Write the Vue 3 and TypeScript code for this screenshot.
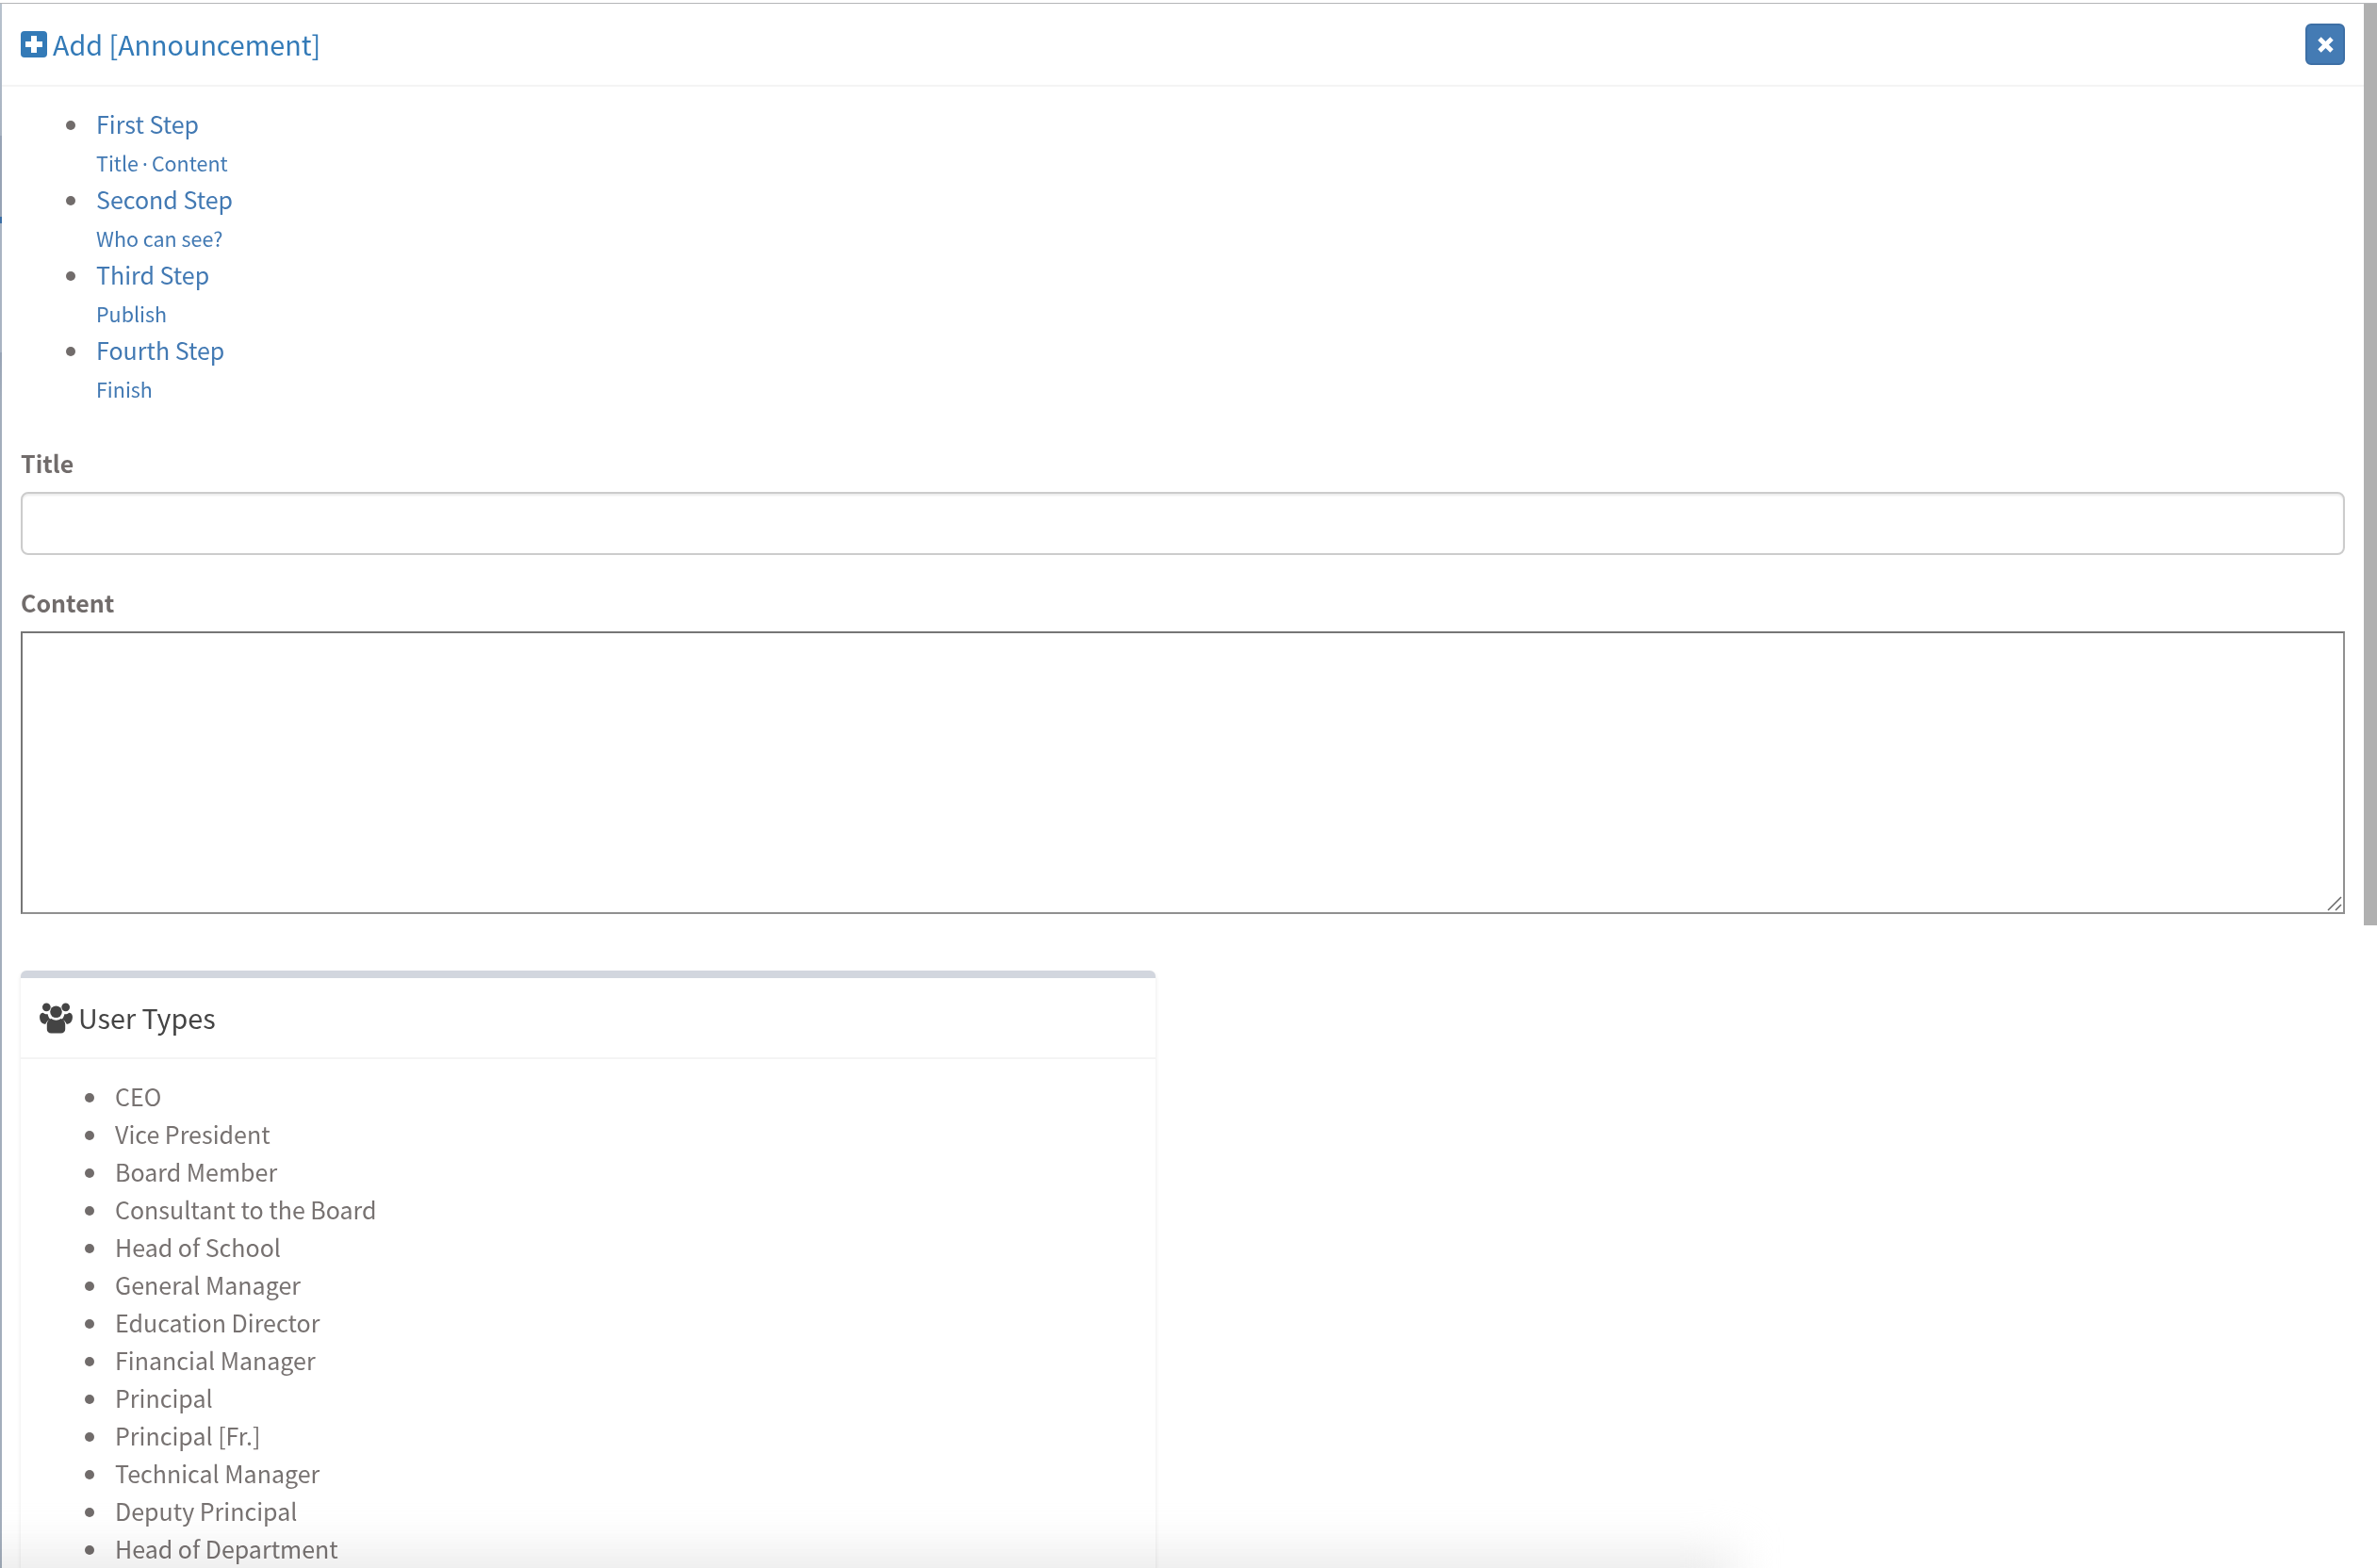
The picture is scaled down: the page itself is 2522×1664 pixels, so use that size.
<script setup lang="ts">
interface Step { title: string; sub: string }

const steps: Step[] = [
  { title: 'First Step', sub: 'Title · Content' },
  { title: 'Second Step', sub: 'Who can see?' },
  { title: 'Third Step', sub: 'Publish' },
  { title: 'Fourth Step', sub: 'Finish' },
]

const userTypes = [
  'CEO',
  'Vice President',
  'Board Member',
  'Consultant to the Board',
  'Head of School',
  'General Manager',
  'Education Director',
  'Financial Manager',
  'Principal',
  'Principal [Fr.]',
  'Technical Manager',
  'Deputy Principal',
  'Head of Department',
]
</script>

<template>
  <div class="page">
    <div class="modal">
      <header class="modal-header">
        <h4 class="modal-title">
          <svg class="plus-icon" viewBox="0 0 28 28">
            <rect width="28" height="28" rx="4" fill="#337ab7" />
            <path d="M11 5h6v6h6v6h-6v6h-6v-6H5v-6h6z" fill="#fff" />
          </svg>
          <span>Add [Announcement]</span>
        </h4>
        <button class="close-btn" type="button" aria-label="Close">
          <svg viewBox="2 2 12 12" width="17" height="17">
            <path d="M2.2 4.6 4.6 2.200 8 5.600l3.400-3.400 2.400 2.400L10.400 8l3.400 3.400-2.400 2.400L8 10.400l-3.400 3.400-2.400-2.400L5.600 8z" fill="#fff" />
          </svg>
        </button>
      </header>

      <div class="modal-body">
        <ul class="steps">
          <li v-for="s in steps" :key="s.title">
            <a class="step-title">{{ s.title }}</a>
            <a class="step-sub">
              <template v-for="(part, i) in s.sub.split(' · ')" :key="part">
                <span v-if="i" class="dot"> · </span>{{ part }}
              </template>
            </a>
          </li>
        </ul>

        <div class="field title-field">
          <label>Title</label>
          <input type="text" class="title-input" />
        </div>

        <div class="field content-field">
          <label>Content</label>
          <div class="textarea-wrap">
            <textarea class="content-input"></textarea>
            <svg class="grip" viewBox="0 0 16 16">
              <path d="M1 15 15 1M9 15l6-6" stroke="#666" stroke-width="1.500" fill="none" />
            </svg>
          </div>
        </div>

        <section class="box">
          <div class="box-header">
            <svg class="users-icon" viewBox="0 0 36 34">
              <g fill="#444">
                <circle cx="7.500" cy="5" r="4.500" />
                <circle cx="28.500" cy="5" r="4.500" />
                <circle cx="18" cy="10" r="6.500" />
                <path d="M0 15.500C0 12.500 2 11 4 11c1 1 2.500 1.600 4 1.600.3 0 .6 0 .9-.1.3 2.300 1.300 4.300 3 5.800-2.300 .8-4.400 2.600-5.400 5.200C3 23.500 0 21 0 15.500zM36 15.500c0-3-2-4.500-4-4.500-1 1-2.500 1.600-4 1.600-.3 0-.6 0-.9-.1-.3 2.300-1.300 4.300-3 5.800 2.300 .8 4.400 2.600 5.400 5.200C33 23.500 36 21 36 15.500z" />
                <path d="M8 24c0-3.500 2.500-6 5-6.500 1.300 1.100 3 1.700 5 1.700s3.700-.6 5-1.700c2.500 .5 5 3 5 6.500v5c0 2.500-2 4.500-4.500 4.500h-11C10 33.500 8 31.500 8 29z" />
              </g>
            </svg>
            <span>User Types</span>
          </div>
          <ul class="type-list">
            <li v-for="t in userTypes" :key="t">{{ t }}</li>
          </ul>
        </section>
      </div>
    </div>

    <div class="strip"></div>
    <div class="scrollbar"></div>
    <div class="fade"></div>
  </div>
</template>

<style>
html, body {
  margin: 0;
  height: 1664px;
  overflow: hidden;
  background: #fff;
}
</style>

<style scoped>
.page {
  position: relative;
  width: 2522px;
  height: 1664px;
  overflow: hidden;
  background: #fff;
  box-sizing: border-box;
  padding-top: 3px;
  font-family: "Noto Sans CJK SC", "Noto Sans", sans-serif;
  font-size: 25px;
  line-height: 40px;
  color: #777271;
}
.modal {
  border-top: 1px solid #b4b6b8;
  padding-left: 2px;
}
.modal-header {
  display: flex;
  align-items: center;
  justify-content: space-between;
  height: 86px;
  padding: 0 34px 0 20px;
  border-bottom: 2px solid #f4f4f4;
}
.modal-title {
  display: flex;
  align-items: center;
  gap: 6px;
  margin: 0;
  font-size: 28.700px;
  line-height: 38px;
  font-weight: 400;
  color: #337ab7;
}
.plus-icon { width: 28px; height: 28px; }
.close-btn {
  display: flex;
  align-items: center;
  justify-content: center;
  width: 42px;
  height: 44px;
  padding: 0;
  border: 2px solid #3d6fa5;
  border-radius: 6px;
  background: #447bb4;
}
.modal-body { padding: 20px 34px 0 20px; }
.steps {
  margin: 0;
  padding: 0 0 0 80px;
  list-style: none;
}
.steps li, .type-list li {
  position: relative;
}
.steps li { height: 80px; }
.steps li::before, .type-list li::before {
  content: "";
  position: absolute;
  top: 16px;
  left: -32px;
  width: 10px;
  height: 10px;
  border-radius: 50%;
  background: #716c6b;
}
.step-title {
  display: block;
  height: 40px;
  line-height: 38px;
  color: #4279b3;
}
.step-sub {
  display: block;
  height: 40px;
  line-height: 41px;
  font-size: 21.500px;
  color: #4279b3;
}
.dot {
  font-family: "Noto Sans", sans-serif;
  margin: 0 -1.500px;
}
.field label {
  display: block;
  height: 40px;
  line-height: 38px;
  font-weight: 700;
  color: #716c6b;
  margin-bottom: 10px;
}
.title-field { margin-top: 40px; }
.title-input {
  display: block;
  width: 100%;
  height: 67px;
  box-sizing: border-box;
  border: 2px solid #ccc;
  border-radius: 8px;
  box-shadow: inset 0 2px 2px rgba(0, 0, 0, 0.075);
  background: #fff;
}
.content-field { margin-top: 31px; }
.textarea-wrap { position: relative; }
.content-input {
  display: block;
  width: 100%;
  height: 300px;
  box-sizing: border-box;
  margin: 0;
  border: 2px solid #767676;
  border-color: #767676 #909090 #909090 #767676;
  border-radius: 0;
  background: #fff;
  resize: none;
}
.grip {
  position: absolute;
  right: 3px;
  bottom: 3px;
  width: 16px;
  height: 16px;
}
.box {
  width: 1204px;
  margin-top: 60px;
  border-top: 8px solid #d2d6de;
  border-radius: 6px 6px 0 0;
  box-shadow: 0 2px 4px rgba(0, 0, 0, 0.1);
  background: #fff;
}
.box-header {
  display: flex;
  align-items: center;
  gap: 6px;
  height: 84px;
  padding: 0 20px;
  border-bottom: 2px solid #f4f4f4;
  font-size: 28.700px;
  color: #444;
}
.users-icon { width: 35px; height: 33px; }
.type-list {
  margin: 0;
  padding: 20px 0 0 100px;
  list-style: none;
}
.type-list li {
  height: 40px;
  line-height: 38px;
}
.strip {
  position: absolute;
  top: 4px;
  left: 0;
  width: 2px;
  bottom: 0;
  background: linear-gradient(to bottom,
    #b8c2cd 0, #a8b3c1 140px,
    #97a3b5 140px, #97a3b5 226px,
    #3b6ea5 226px, #3b6ea5 233px,
    #a9b4c3 233px, #a9b4c3 370px,
    #97a3b5 370px, #a3aebc 420px, #a3aebc 100%);
}
.scrollbar {
  position: absolute;
  top: 4px;
  right: 0;
  width: 14px;
  height: 978px;
  background: #b0b0b0;
}
.fade {
  position: absolute;
  left: -100px;
  top: 1648px;
  width: 1940px;
  height: 200px;
  background: #eaeaea;
  filter: blur(24px);
  mix-blend-mode: multiply;
  pointer-events: none;
}
</style>
